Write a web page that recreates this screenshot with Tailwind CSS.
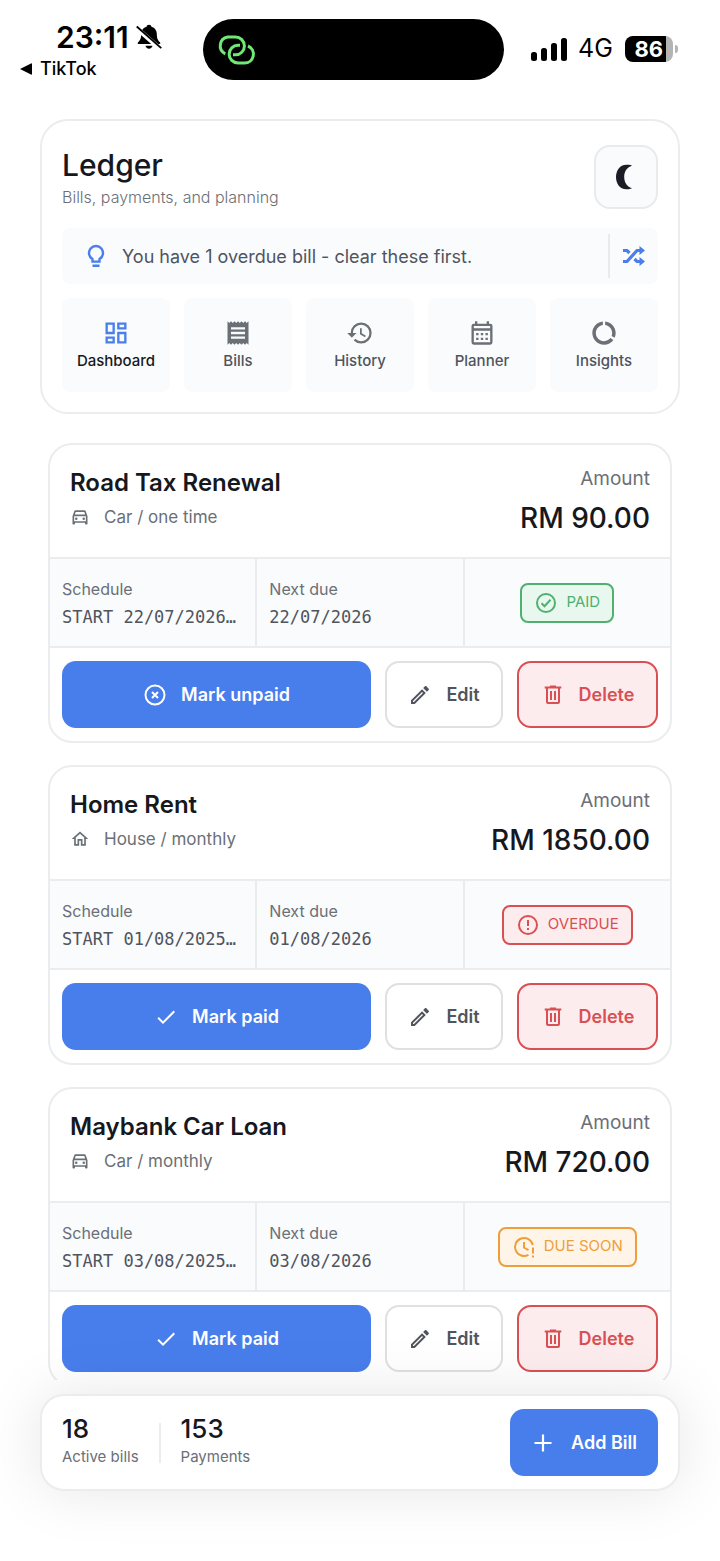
<!DOCTYPE html>
<html lang="en">
<head>
	<meta charset="UTF-8">
	<meta name="viewport" content="width=device-width, initial-scale=1.0">
	<title>Ledger</title>
	<script src="https://cdn.jsdelivr.net/npm/@tailwindcss/browser@4"></script>
</head>
<body class="bg-white font-['Inter',sans-serif] text-[#16181d]">
	<!-- Icon sprite -->
	<svg class="hidden" aria-hidden="true">
		<symbol id="i-car" viewBox="0 0 24 24"><path d="M18.92 5.01C18.72 4.42 18.16 4 17.5 4h-11c-.66 0-1.21.42-1.42 1.01L3 11v9c0 .55.45 1 1 1h1c.55 0 1-.45 1-1v-1h12v1c0 .55.45 1 1 1h1c.55 0 1-.45 1-1v-9l-2.08-5.99zM6.85 6h10.29l1.04 3H5.81l1.04-3zM19 17H5v-6h14v6z"/><circle cx="7.5" cy="14" r="1.5"/><circle cx="16.5" cy="14" r="1.5"/></symbol>
		<symbol id="i-home" viewBox="0 0 24 24"><path d="M12 5.69l5 4.5V18h-2v-6H9v6H7v-7.81l5-4.5M12 3L2 12h3v8h6v-6h2v6h6v-8h3L12 3z"/></symbol>
		<symbol id="i-edit" viewBox="0 0 24 24"><path d="M14.06 9.02l.92.92L5.92 19H5v-.92l9.06-9.06M17.66 3c-.25 0-.51.1-.7.29l-1.83 1.83 3.75 3.75 1.83-1.83c.39-.39.39-1.02 0-1.41l-2.34-2.34c-.2-.2-.45-.29-.71-.29zm-3.6 3.19L3 17.25V21h3.75L17.81 9.94l-3.75-3.75z"/></symbol>
		<symbol id="i-trash" viewBox="0 0 24 24"><path d="M15 3.500V2.500H9v1H3.700v2H5V19a2 2 0 0 0 2 2h10a2 2 0 0 0 2-2V5.500h1.300v-2H15zM17 19H7V5.500h10V19zM9 8h2v9H9zM13 8h2v9h-2z"/></symbol>
		<symbol id="i-check" viewBox="0 0 24 24"><path d="M9 16.17L4.83 12l-1.42 1.41L9 19 21 7l-1.41-1.41z"/></symbol>
		<symbol id="i-cancel" viewBox="0 0 24 24"><g fill="none" stroke="currentColor" stroke-width="2"><circle cx="12" cy="12" r="9.5"/><path d="M9 9l6 6M15 9l-6 6"/></g></symbol>
	</svg>

	<div class="flex h-screen flex-col">
		<!-- Status bar -->
		<div class="grid shrink-0 grid-cols-[203px_301px_1fr] pt-[19px] text-black">
			<div class="pl-5">
				<div class="flex items-center gap-1.5 pl-9 text-[30px] leading-9 font-semibold">
					<span>23:11</span>
					<svg class="size-7" viewBox="0 0 24 24" fill="currentColor"><path d="M12 1.500c-1.200 0-2 .8-2.100 1.700C7 4 5.300 6.500 5.300 9.500c0 4-1 5.500-2.800 7.200-.5.500-.2 1.300.5 1.300h18c.7 0 1-.8.500-1.300-1.800-1.700-2.800-3.200-2.800-7.200 0-3-1.700-5.500-4.600-6.300C14 2.300 13.200 1.500 12 1.500zM9 19.500c.3 1.500 1.500 2.500 3 2.500s2.700-1 3-2.500z"/><path d="M1 4l21 18.500" stroke="#fff" stroke-width="4"/><path d="M1.500 3L22.500 21.500" stroke="currentColor" stroke-width="1.600"/></svg>
				</div>
				<a href="#" class="flex items-center gap-2 text-[18px] leading-7 font-medium">
					<svg class="size-3" viewBox="0 0 12 12" fill="currentColor"><path d="M0 6L11 0.500Q12 0 12 1V11Q12 12 11 11.500z"/></svg>
					TikTok
				</a>
			</div>
			<div class="flex h-[61px] items-center rounded-full bg-black pl-3.5">
				<svg class="h-8 w-10" viewBox="0 0 40 32" fill="none" stroke="#6fe876" stroke-width="3"><path d="M8.300 19.800A8.900 8.900 0 0 1 10.700 3H18.500A8.900 8.900 0 0 1 18.500 20.800H16"/><path d="M23 11.300H21A8.850 8.850 0 0 0 21 29H27.500A8.850 8.850 0 0 0 31 12"/></svg>
			</div>
			<div class="flex h-[60px] items-center pl-[27px]">
				<svg class="h-6 w-[37px]" viewBox="0 0 37 24" fill="currentColor"><rect x="0" y="15" width="6" height="9" rx="2.500"/><rect x="10" y="11" width="6" height="13" rx="2.500"/><rect x="20" y="6" width="6" height="18" rx="2.500"/><rect x="30" y="1" width="6" height="23" rx="2.500"/></svg>
				<span class="ml-2.5 text-[25px]">4G</span>
				<span class="ml-3 flex h-[26px] w-12 items-center justify-center rounded-lg bg-linear-to-r from-black from-85% to-[#b4b4b4] to-85% text-[22px] font-bold text-white">86</span>
				<span class="ml-0.5 h-2 w-[3px] rounded-r-full bg-[#b4b4b4]"></span>
			</div>
		</div>

		<!-- Header card -->
		<header class="mx-10 mt-9 shrink-0 rounded-[28px] border-2 border-[#ebecee] p-5">
			<div class="flex items-start justify-between pt-1">
				<div>
					<h1 class="text-[30px] leading-10 font-medium">Ledger</h1>
					<p class="text-[16px] leading-6 font-light text-[#6b6f76]">Bills, payments, and planning</p>
				</div>
				<button type="button" aria-label="Dark mode" class="flex size-16 items-center justify-center rounded-2xl border-2 border-[#e8eaec] bg-[#f9fbfd]">
					<svg class="size-7" viewBox="0 0 28 28" fill="#1b1c26"><path d="M16.500 1.800C8 .500 4 7.500 4 14s4 13.500 12.500 12.200q2.500-.3 3.500-1C14.500 23.500 12.200 19 12.200 14S14.500 4.500 20 2.800q-1-.8-3.500-1z"/></svg>
				</button>
			</div>
			<div class="mt-[19px] flex h-14 items-center rounded-lg bg-[#f9fbfd] text-[#4a7feb]">
				<svg class="ml-5 size-7" viewBox="0 0 28 28" fill="none" stroke="currentColor" stroke-width="2.400"><path d="M10.500 19.600v-2.500a7 7 0 1 1 7 0v2.500zM10.500 23.800h7"/></svg>
				<p class="ml-3 flex-1 text-[18px] text-[#50545e]">You have 1 overdue bill - clear these first.</p>
				<button type="button" aria-label="Next tip" class="flex h-11 w-[50px] items-center justify-center border-l-2 border-[#e8eaec]">
					<svg class="h-5 w-6" viewBox="0 0 24 20" fill="none" stroke="currentColor" stroke-width="3.200"><path d="M1 4.500h4l2.500 2.500M1 15.500h4L15 4.500h4M12.500 13l2.500 2.500h4"/><path d="M17.500 0l5.500 4.500-5.500 4.500zM17.500 11l5.500 4.500-5.500 4.500z" fill="currentColor" stroke="none"/></svg>
				</button>
			</div>
			<nav class="mt-3.5 grid grid-cols-5 gap-3.5 text-center text-[15px] leading-5 font-medium text-[#50545c]">
				<a href="#" class="flex h-[94px] flex-col items-center justify-center gap-1 rounded-lg bg-[#f9fbfd] text-[#16181d]">
					<svg class="size-7 text-[#4a7feb]" viewBox="0 0 24 24" fill="currentColor"><path d="M19 5v2h-4V5h4M9 5v6H5V5h4m10 8v6h-4v-6h4M9 17v2H5v-2h4M21 3h-8v6h8V3zM11 3H3v10h8V3zm10 8h-8v10h8V11zm-10 4H3v6h8v-6z"/></svg>
					Dashboard
				</a>
				<a href="#" class="flex flex-col items-center justify-center gap-1 rounded-lg bg-[#f9fbfd]">
					<svg class="size-7 text-[#6b6f76]" viewBox="0 0 24 24" fill="currentColor"><path d="M18 17H6v-2h12v2zm0-4H6v-2h12v2zm0-4H6V7h12v2zM3 22l1.500-1.500L6 22l1.500-1.500L9 22l1.500-1.500L12 22l1.500-1.500L15 22l1.500-1.500L18 22l1.500-1.500L21 22V2l-1.500 1.500L18 2l-1.500 1.500L15 2l-1.500 1.500L12 2l-1.500 1.500L9 2 7.500 3.500 6 2 4.500 3.500 3 2v20z"/></svg>
					Bills
				</a>
				<a href="#" class="flex flex-col items-center justify-center gap-1 rounded-lg bg-[#f9fbfd]">
					<svg class="size-7 text-[#6b6f76]" viewBox="0 0 24 24" fill="currentColor"><path d="M13 3a9 9 0 0 0-9 9H1l3.890 3.890.07.14L9 12H6c0-3.870 3.130-7 7-7s7 3.130 7 7-3.130 7-7 7c-1.930 0-3.680-.79-4.940-2.060l-1.420 1.420A8.954 8.954 0 0 0 13 21a9 9 0 0 0 0-18zm-1 5v5l4.280 2.540.72-1.210-3.500-2.080V8H12z"/></svg>
					History
				</a>
				<a href="#" class="flex flex-col items-center justify-center gap-1 rounded-lg bg-[#f9fbfd]">
					<svg class="size-7 text-[#6b6f76]" viewBox="0 0 24 24" fill="currentColor"><path d="M19 4h-1V2h-2v2H8V2H6v2H5a2 2 0 0 0-2 2v14a2 2 0 0 0 2 2h14a2 2 0 0 0 2-2V6a2 2 0 0 0-2-2zm0 16H5V10h14v10zm0-12H5V6h14v2zM9 14H7v-2h2v2zm4 0h-2v-2h2v2zm4 0h-2v-2h2v2zm-8 4H7v-2h2v2zm4 0h-2v-2h2v2zm4 0h-2v-2h2v2z"/></svg>
					Planner
				</a>
				<a href="#" class="flex flex-col items-center justify-center gap-1 rounded-lg bg-[#f9fbfd]">
					<svg class="size-7 text-[#6b6f76]" viewBox="0 0 24 24" fill="currentColor"><path d="M13 2.050v3.030c3.390.49 6 3.390 6 6.920 0 .9-.18 1.750-.48 2.540l2.600 1.530c.56-1.240.88-2.620.88-4.070 0-5.180-3.950-9.450-9-9.950zM12 19c-3.870 0-7-3.130-7-7 0-3.530 2.610-6.430 6-6.920V2.050c-5.060.5-9 4.760-9 9.950 0 5.520 4.470 10 9.990 10 3.310 0 6.240-1.610 8.060-4.090l-2.600-1.530C16.170 17.980 14.210 19 12 19z"/></svg>
					Insights
				</a>
			</nav>
		</header>

		<!-- Bills -->
		<main class="mt-[29px] flex min-h-0 flex-1 flex-col gap-[22px] overflow-y-auto px-12 [scrollbar-width:none]">
			<article class="shrink-0 overflow-hidden rounded-3xl border-2 border-[#ebecee]">
				<div class="flex h-28 justify-between px-5 pt-5">
					<div>
						<h2 class="text-[24px] leading-9 font-semibold">Road Tax Renewal</h2>
						<p class="flex items-center gap-3.5 text-[17px] leading-8 text-[#6b6f76]"><svg class="size-5" fill="currentColor"><use href="#i-car"/></svg>Car / one time</p>
					</div>
					<div class="text-right">
						<p class="text-[19px] leading-7 text-[#6b6f76]">Amount</p>
						<p class="text-[28px] leading-[50px] font-medium">RM 90.00</p>
					</div>
				</div>
				<div class="grid h-[91px] grid-cols-3 gap-x-0.5 border-y-2 border-[#ebecee] bg-[#ebecee]">
					<div class="min-w-0 bg-[#f9fbfd] px-3 pt-4">
						<p class="text-[16px] leading-7 text-[#6b6f76]">Schedule</p>
						<p class="font-['DejaVu_Sans_Mono',monospace] text-[17px] leading-7 text-[#50545c]">START 22/07/2026…</p>
					</div>
					<div class="min-w-0 bg-[#f9fbfd] px-3 pt-4">
						<p class="text-[16px] leading-7 text-[#6b6f76]">Next due</p>
						<p class="font-['DejaVu_Sans_Mono',monospace] text-[17px] leading-7 text-[#50545c]">22/07/2026</p>
					</div>
					<div class="flex items-center justify-center bg-[#f9fbfd]">
						<span class="flex h-10 items-center gap-2 rounded-lg border-2 border-[#4fb06f] bg-[#e9f8ef] px-3 text-[15px] text-[#4fb06f]">
							<svg class="size-6" viewBox="0 0 24 24" fill="none" stroke="currentColor" stroke-width="2"><circle cx="12" cy="12" r="9"/><path d="M7.500 12.200l3 3 6-6.400"/></svg>PAID
						</span>
					</div>
				</div>
				<div class="flex gap-3.5 px-3 py-[13px] text-[18px] font-semibold">
					<button type="button" class="flex h-[67px] flex-1 items-center justify-center gap-3.5 rounded-[14px] bg-[#487eec] text-white"><svg class="size-6"><use href="#i-cancel"/></svg>Mark unpaid</button>
					<button type="button" class="flex w-[118px] items-center justify-center gap-3.5 rounded-[14px] border-2 border-[#dfe0e3] text-[#50545c]"><svg class="size-6" fill="currentColor"><use href="#i-edit"/></svg>Edit</button>
					<button type="button" class="flex w-[141px] items-center justify-center gap-3.5 rounded-[14px] border-2 border-[#d95054] bg-[#fceced] text-[#d95054]"><svg class="size-6" fill="currentColor"><use href="#i-trash"/></svg>Delete</button>
				</div>
			</article>

			<article class="shrink-0 overflow-hidden rounded-3xl border-2 border-[#ebecee]">
				<div class="flex h-28 justify-between px-5 pt-5">
					<div>
						<h2 class="text-[24px] leading-9 font-semibold">Home Rent</h2>
						<p class="flex items-center gap-3.5 text-[17px] leading-8 text-[#6b6f76]"><svg class="size-5" fill="currentColor"><use href="#i-home"/></svg>House / monthly</p>
					</div>
					<div class="text-right">
						<p class="text-[19px] leading-7 text-[#6b6f76]">Amount</p>
						<p class="text-[28px] leading-[50px] font-medium">RM 1850.00</p>
					</div>
				</div>
				<div class="grid h-[91px] grid-cols-3 gap-x-0.5 border-y-2 border-[#ebecee] bg-[#ebecee]">
					<div class="min-w-0 bg-[#f9fbfd] px-3 pt-4">
						<p class="text-[16px] leading-7 text-[#6b6f76]">Schedule</p>
						<p class="font-['DejaVu_Sans_Mono',monospace] text-[17px] leading-7 text-[#50545c]">START 01/08/2025…</p>
					</div>
					<div class="min-w-0 bg-[#f9fbfd] px-3 pt-4">
						<p class="text-[16px] leading-7 text-[#6b6f76]">Next due</p>
						<p class="font-['DejaVu_Sans_Mono',monospace] text-[17px] leading-7 text-[#50545c]">01/08/2026</p>
					</div>
					<div class="flex items-center justify-center bg-[#f9fbfd]">
						<span class="flex h-10 items-center gap-2 rounded-lg border-2 border-[#d95054] bg-[#fceced] px-3 text-[15px] text-[#d95054]">
							<svg class="size-6" viewBox="0 0 24 24" fill="none" stroke="currentColor" stroke-width="2"><circle cx="12" cy="12" r="9"/><path d="M12 7v6M12 15v2"/></svg>OVERDUE
						</span>
					</div>
				</div>
				<div class="flex gap-3.5 px-3 py-[13px] text-[18px] font-semibold">
					<button type="button" class="flex h-[67px] flex-1 items-center justify-center gap-3.5 rounded-[14px] bg-[#487eec] text-white"><svg class="size-6" fill="currentColor"><use href="#i-check"/></svg>Mark paid</button>
					<button type="button" class="flex w-[118px] items-center justify-center gap-3.5 rounded-[14px] border-2 border-[#dfe0e3] text-[#50545c]"><svg class="size-6" fill="currentColor"><use href="#i-edit"/></svg>Edit</button>
					<button type="button" class="flex w-[141px] items-center justify-center gap-3.5 rounded-[14px] border-2 border-[#d95054] bg-[#fceced] text-[#d95054]"><svg class="size-6" fill="currentColor"><use href="#i-trash"/></svg>Delete</button>
				</div>
			</article>

			<article class="shrink-0 overflow-hidden rounded-3xl border-2 border-[#ebecee]">
				<div class="flex h-28 justify-between px-5 pt-5">
					<div>
						<h2 class="text-[24px] leading-9 font-semibold">Maybank Car Loan</h2>
						<p class="flex items-center gap-3.5 text-[17px] leading-8 text-[#6b6f76]"><svg class="size-5" fill="currentColor"><use href="#i-car"/></svg>Car / monthly</p>
					</div>
					<div class="text-right">
						<p class="text-[19px] leading-7 text-[#6b6f76]">Amount</p>
						<p class="text-[28px] leading-[50px] font-medium">RM 720.00</p>
					</div>
				</div>
				<div class="grid h-[91px] grid-cols-3 gap-x-0.5 border-y-2 border-[#ebecee] bg-[#ebecee]">
					<div class="min-w-0 bg-[#f9fbfd] px-3 pt-4">
						<p class="text-[16px] leading-7 text-[#6b6f76]">Schedule</p>
						<p class="font-['DejaVu_Sans_Mono',monospace] text-[17px] leading-7 text-[#50545c]">START 03/08/2025…</p>
					</div>
					<div class="min-w-0 bg-[#f9fbfd] px-3 pt-4">
						<p class="text-[16px] leading-7 text-[#6b6f76]">Next due</p>
						<p class="font-['DejaVu_Sans_Mono',monospace] text-[17px] leading-7 text-[#50545c]">03/08/2026</p>
					</div>
					<div class="flex items-center justify-center bg-[#f9fbfd]">
						<span class="flex h-10 items-center gap-2 rounded-lg border-2 border-[#ee9f3c] bg-[#fef4e8] px-3 text-[15px] text-[#ee9f3c]">
							<svg class="size-6" viewBox="0 0 24 24" fill="none" stroke="currentColor" stroke-width="2"><path d="M16.500 19.800A9 9 0 1 1 20.800 10M12 7v5.500l4.500 2.700M21 12.500v6M21 20.500v2"/></svg>DUE SOON
						</span>
					</div>
				</div>
				<div class="flex gap-3.5 px-3 py-[13px] text-[18px] font-semibold">
					<button type="button" class="flex h-[67px] flex-1 items-center justify-center gap-3.5 rounded-[14px] bg-[#487eec] text-white"><svg class="size-6" fill="currentColor"><use href="#i-check"/></svg>Mark paid</button>
					<button type="button" class="flex w-[118px] items-center justify-center gap-3.5 rounded-[14px] border-2 border-[#dfe0e3] text-[#50545c]"><svg class="size-6" fill="currentColor"><use href="#i-edit"/></svg>Edit</button>
					<button type="button" class="flex w-[141px] items-center justify-center gap-3.5 rounded-[14px] border-2 border-[#d95054] bg-[#fceced] text-[#d95054]"><svg class="size-6" fill="currentColor"><use href="#i-trash"/></svg>Delete</button>
				</div>
			</article>
		</main>

		<!-- Summary bar -->
		<footer class="relative z-10 mx-10 mt-3.5 mb-[70px] flex shrink-0 items-center rounded-3xl border-2 border-[#ebecee] bg-white px-5 py-[13px] shadow-[0_0_60px_rgba(0,0,0,0.1)]">
			<div class="pb-1">
				<p class="text-[26px] leading-8 font-medium">18</p>
				<p class="text-[15px] leading-6 text-[#6b6f76]">Active bills</p>
			</div>
			<div class="mx-5 h-10 w-0.5 bg-[#ebecee]"></div>
			<div class="pb-1">
				<p class="text-[26px] leading-8 font-medium">153</p>
				<p class="text-[15px] leading-6 text-[#6b6f76]">Payments</p>
			</div>
			<button type="button" class="ml-auto flex h-[67px] w-[148px] items-center justify-center gap-4 rounded-[14px] bg-[#487eec] text-[18px] font-semibold text-white">
				<svg class="size-6" viewBox="0 0 24 24" fill="none" stroke="currentColor" stroke-width="2.200"><path d="M12 3.500v17M3.500 12h17"/></svg>Add Bill
			</button>
		</footer>
	</div>
</body>
</html>
